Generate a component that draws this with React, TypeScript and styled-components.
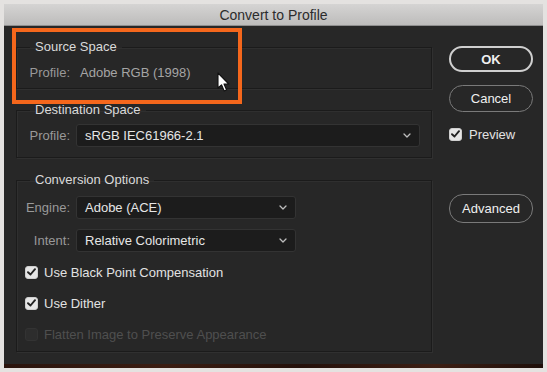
import { FC } from "react";
import styled, { createGlobalStyle } from "styled-components";

const GlobalStyle = createGlobalStyle`
  html, body {
    margin: 0;
    padding: 0;
    background: #e4e2e0;
    font-family: "Liberation Sans", Arial, sans-serif;
  }
`;

const Page = styled.div`
  position: relative;
  width: 547px;
  height: 372px;
  padding: 4px 4px 0 4px;
  box-sizing: border-box;
`;

const Dialog = styled.div`
  display: flex;
  flex-direction: column;
  width: 539px;
`;

const TitleBar = styled.div`
  height: 22px;
  display: flex;
  align-items: center;
  justify-content: center;
  background: linear-gradient(#d5d4d3, #bdbcbb);
  border-bottom: 1px solid #8e8e8e;
  color: #2c2c2c;
  font-size: 14px;
  box-sizing: border-box;
`;

const Body = styled.div`
  display: flex;
  gap: 17px;
  height: 338px;
  padding: 0 10px 0 12px;
  background: #272727;
`;

const BottomStrip = styled.div`
  height: 4px;
  background: linear-gradient(90deg, #2a140d, #3b1d12 30%, #24100a 55%, #3d1f14 80%, #1f0f0a);
`;

const LeftColumn = styled.div`
  width: 416px;
  display: flex;
  flex-direction: column;
`;

const Group = styled.fieldset<{ $top: number; $pt: number; $pb: number }>`
  margin: ${(p) => p.$top}px 0 0 0;
  padding: ${(p) => p.$pt}px 8px ${(p) => p.$pb}px 8px;
  border: 1px solid #1b1b1b;
  box-shadow: inset 1px 1px 0 #2f2f2f, 1px 1px 0 #303030;
  min-width: 0;
  display: flex;
  flex-direction: column;
`;

const Legend = styled.legend`
  margin-left: 5px;
  padding: 0 5px;
  line-height: 16px;
  font-size: 13px;
  color: #dadada;
`;

const Row = styled.div<{ $gap?: number }>`
  display: flex;
  align-items: center;
  gap: ${(p) => p.$gap ?? 6}px;
`;

const FieldLabel = styled.span`
  width: 45px;
  text-align: right;
  font-size: 13px;
  color: #999999;
`;

const StaticValue = styled.span`
  font-size: 13px;
  color: #a5a5a5;
`;

const Select = styled.div<{ $w: number }>`
  width: ${(p) => p.$w}px;
  height: 23px;
  box-sizing: border-box;
  display: flex;
  align-items: center;
  justify-content: space-between;
  padding: 0 8px 0 8px;
  background: #1c1c1c;
  border: 1px solid #333333;
  border-radius: 3px;
  color: #e6e6e6;
  font-size: 13px;
`;

const Stack = styled.div<{ $gap: number }>`
  display: flex;
  flex-direction: column;
  gap: ${(p) => p.$gap}px;
`;

const CheckRow = styled.div<{ $disabled?: boolean }>`
  height: 20px;
  display: flex;
  align-items: center;
  gap: 6px;
  font-size: 13px;
  color: ${(p) => (p.$disabled ? "#4f4f4f" : "#e2e2e2")};
`;

const Box = styled.span<{ $on?: boolean; $disabled?: boolean }>`
  width: 13px;
  height: 13px;
  box-sizing: border-box;
  border-radius: 3px;
  display: flex;
  align-items: center;
  justify-content: center;
  background: ${(p) => (p.$disabled ? "#2d2d2d" : "#e6e6e6")};
  border: 1px solid ${(p) => (p.$disabled ? "#333" : "#cfcfcf")};
`;

const RightColumn = styled.div`
  width: 84px;
  padding-top: 20px;
  display: flex;
  flex-direction: column;
`;

const Button = styled.div<{ $primary?: boolean; $mt: number; $h: number }>`
  margin-top: ${(p) => p.$mt}px;
  height: ${(p) => p.$h}px;
  box-sizing: border-box;
  border-radius: 14px;
  display: flex;
  align-items: center;
  justify-content: center;
  border: ${(p) => (p.$primary ? "2px solid #cfcfcf" : "1.5px solid #7a7a7a")};
  color: #f0f0f0;
  font-size: 13px;
  font-weight: ${(p) => (p.$primary ? 700 : 400)};
`;

const PreviewRow = styled(CheckRow)`
  margin-top: 12px;
  gap: 7px;
`;

const Highlight = styled.div`
  position: absolute;
  left: 12px;
  top: 28px;
  width: 230px;
  height: 76px;
  box-sizing: border-box;
  border: 4px solid #f5671c;
  pointer-events: none;
`;

const Cursor = styled.svg`
  position: absolute;
  left: 217px;
  top: 72px;
`;

const Check: FC = () => (
  <svg width="9" height="8" viewBox="0 0 9 8">
    <path d="M1 4.2 L3.5 6.5 L8 1.2" fill="none" stroke="#222" strokeWidth="1.9" strokeLinecap="round" strokeLinejoin="round" />
  </svg>
);

const Chevron: FC = () => (
  <svg width="8" height="5" viewBox="0 0 8 5">
    <path d="M1 1 L4 4 L7 1" fill="none" stroke="#bdbdbd" strokeWidth="1.3" strokeLinecap="round" strokeLinejoin="round" />
  </svg>
);

const Checkbox: FC<{ on?: boolean; disabled?: boolean; label: string }> = ({ on, disabled, label }) => (
  <CheckRow $disabled={disabled}>
    <Box $on={on} $disabled={disabled}>{on && <Check />}</Box>
    {label}
  </CheckRow>
);

const App: FC = () => {
  return (
    <Page>
      <GlobalStyle />
      <Dialog>
        <TitleBar>Convert to Profile</TitleBar>
        <Body>
          <LeftColumn>
            <Group $top={13} $pt={10} $pb={8}>
              <Legend>Source Space</Legend>
              <Row $gap={10}>
                <FieldLabel>Profile:</FieldLabel>
                <StaticValue>Adobe RGB (1998)</StaticValue>
              </Row>
            </Group>
            <Group $top={13} $pt={6} $pb={10}>
              <Legend>Destination Space</Legend>
              <Row>
                <FieldLabel>Profile:</FieldLabel>
                <Select $w={344}>
                  sRGB IEC61966-2.1
                  <Chevron />
                </Select>
              </Row>
            </Group>
            <Group $top={14} $pt={8} $pb={7}>
              <Legend>Conversion Options</Legend>
              <Stack $gap={10}>
                <Row>
                  <FieldLabel>Engine:</FieldLabel>
                  <Select $w={220}>
                    Adobe (ACE)
                    <Chevron />
                  </Select>
                </Row>
                <Row>
                  <FieldLabel>Intent:</FieldLabel>
                  <Select $w={220}>
                    Relative Colorimetric
                    <Chevron />
                  </Select>
                </Row>
                <Stack $gap={11}>
                  <Checkbox on label="Use Black Point Compensation" />
                  <Checkbox on label="Use Dither" />
                  <Checkbox disabled label="Flatten Image to Preserve Appearance" />
                </Stack>
              </Stack>
            </Group>
          </LeftColumn>
          <RightColumn>
            <Button $primary $mt={0} $h={26}>OK</Button>
            <Button $mt={13} $h={27}>Cancel</Button>
            <PreviewRow>
              <Box $on><Check /></Box>
              Preview
            </PreviewRow>
            <Button $mt={50} $h={29}>Advanced</Button>
          </RightColumn>
        </Body>
        <BottomStrip />
      </Dialog>
      <Highlight />
      <Cursor width="13" height="21" viewBox="0 0 13 21">
        <path d="M1 1 L1 16 L4.5 12.8 L7.2 19 L9.6 18 L7 12 L11.8 12 Z" fill="#fff" stroke="#111" strokeWidth="1.1" strokeLinejoin="round" />
      </Cursor>
    </Page>
  );
};

export default App;
